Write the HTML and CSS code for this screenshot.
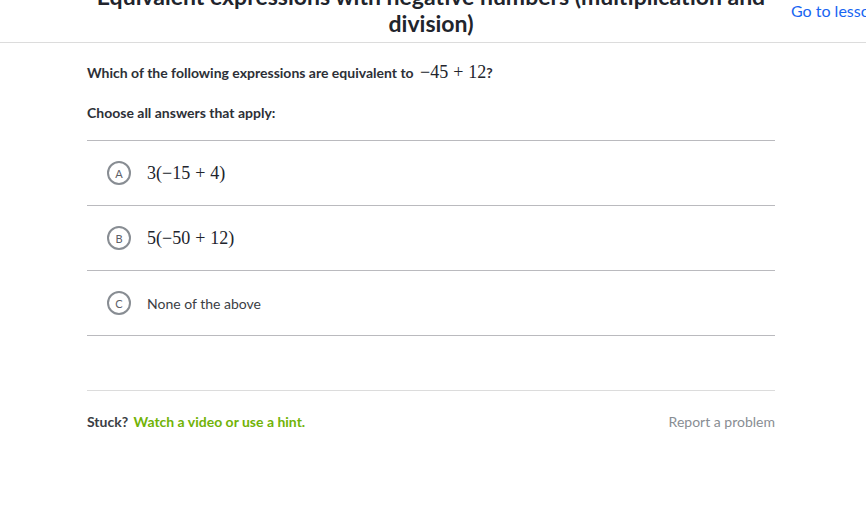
FILE: index.html
```html
<!DOCTYPE html>
<html>
<head>
<meta charset="utf-8">
<link rel="stylesheet" href="styles.css">
</head>
<body>
<header class="top">
  <div class="spacer"></div>
  <h1 class="title">Equivalent expressions with negative numbers (multiplication and division)</h1>
  <a class="lesson" href="#">Go to lesson</a>
</header>
<main class="content">
  <p class="question">Which of the following expressions are equivalent to <span class="math">−45<span class="op">+</span>12</span>?</p>
  <p class="instr">Choose all answers that apply:</p>
  <ul class="choices">
    <li class="choice"><span class="letter">A</span><span class="math big">3(−15<span class="op">+</span>4)</span></li>
    <li class="choice"><span class="letter">B</span><span class="math big">5(−50<span class="op">+</span>12)</span></li>
    <li class="choice"><span class="letter">C</span><span class="plain">None of the above</span></li>
  </ul>
  <footer class="foot">
    <div class="stuck">Stuck? <a class="hint" href="#">Watch a video or use a hint.</a></div>
    <a class="report" href="#">Report a problem</a>
  </footer>
</main>
</body>
</html>
```
FILE: styles.css
```css
* { box-sizing: border-box; }
html, body { margin: 0; padding: 0; background: #fff; }
body {
  font-family: Lato, "Noto Sans", sans-serif;
  color: #21242c;
  overflow: hidden;
}
a { text-decoration: none; }
.top {
  display: grid;
  grid-template-columns: 87px 688px 1fr;
  height: 43px;
  border-bottom: 1px solid #dcdcdc;
  overflow: hidden;
}
.title {
  margin: -17px 0 0;
  font-size: 23px;
  line-height: 27px;
  font-weight: 700;
  text-align: center;
  color: #21242c;
}
.lesson {
  padding-left: 16px;
  font-size: 16px;
  line-height: 22px;
  color: #1865f2;
  white-space: nowrap;
}
.content {
  width: 775px;
  padding-left: 87px;
}
.question {
  margin: 20px 0 0;
  font-size: 14px;
  line-height: 20px;
  font-weight: 700;
  color: #2d3037;
}
.instr {
  margin: 20px 0 0;
  font-size: 14px;
  line-height: 20px;
  font-weight: 700;
  color: #2d3037;
}
.math {
  font-family: "Liberation Serif", "DejaVu Serif", serif;
  font-size: 18px;
  line-height: 0;
  font-weight: 400;
  color: #21242c;
}
.question .math { margin-left: 3px; }
.op { padding: 0 5px; }
.choices {
  list-style: none;
  margin: 17px 0 0;
  padding: 0;
  border-top: 1px solid #bababe;
}
.choice {
  display: flex;
  align-items: center;
  height: 65px;
  padding-left: 20px;
  border-bottom: 1px solid #bababe;
}
.choice .math { line-height: 24px; }
.letter {
  width: 24px;
  height: 24px;
  border: 2px solid #888d93;
  border-radius: 50%;
  display: flex;
  align-items: center;
  justify-content: center;
  font-size: 11px;
  color: #5c6067;
  margin-right: 16px;
  flex: none;
}
.plain {
  font-size: 14px;
  color: #3b3e44;
}
.foot {
  margin-top: 54px;
  border-top: 1px solid #dcdcdc;
  display: flex;
  justify-content: space-between;
  align-items: center;
  padding-top: 21px;
  font-size: 14px;
  line-height: 20px;
}
.stuck {
  font-weight: 700;
  color: #3b3e44;
}
.hint {
  color: #71b307;
  margin-left: 2px;
}
.report {
  color: #888d93;
}
```
